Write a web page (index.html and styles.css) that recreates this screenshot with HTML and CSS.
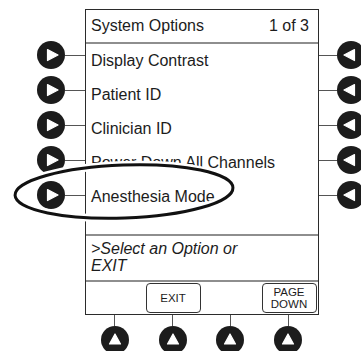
FILE: index.html
```html
<!DOCTYPE html>
<html>
<head>
<meta charset="utf-8">
<link rel="stylesheet" href="styles.css">
</head>
<body>
<div class="device">
  <div class="top">
    <div class="keys keys-left">
      <div class="key-row"><svg class="key" viewBox="0 0 28 28"><circle cx="14" cy="14" r="14"/><path class="tri" d="M10.5 8.5 L21 14 L10.5 19.5 Z"/></svg><span class="wire"></span></div>
      <div class="key-row"><svg class="key" viewBox="0 0 28 28"><circle cx="14" cy="14" r="14"/><path class="tri" d="M10.5 8.5 L21 14 L10.5 19.5 Z"/></svg><span class="wire"></span></div>
      <div class="key-row"><svg class="key" viewBox="0 0 28 28"><circle cx="14" cy="14" r="14"/><path class="tri" d="M10.5 8.5 L21 14 L10.5 19.5 Z"/></svg><span class="wire"></span></div>
      <div class="key-row"><svg class="key" viewBox="0 0 28 28"><circle cx="14" cy="14" r="14"/><path class="tri" d="M10.5 8.5 L21 14 L10.5 19.5 Z"/></svg><span class="wire"></span></div>
      <div class="key-row"><svg class="key" viewBox="0 0 28 28"><circle cx="14" cy="14" r="14"/><path class="tri" d="M10.5 8.5 L21 14 L10.5 19.5 Z"/></svg><span class="wire"></span></div>
    </div>
    <div class="screen">
      <div class="header"><span>System Options</span><span>1 of 3</span></div>
      <div class="options">
        <div class="opt">Display Contrast</div>
        <div class="opt">Patient ID</div>
        <div class="opt">Clinician ID</div>
        <div class="opt">Power Down All Channels</div>
        <div class="opt">Anesthesia Mode</div>
      </div>
      <div class="prompt">&gt;Select an Option or<br>EXIT</div>
      <div class="softkeys">
        <div class="slot"></div>
        <div class="slot"><div class="btn">EXIT</div></div>
        <div class="slot"></div>
        <div class="slot"><div class="btn">PAGE<br>DOWN</div></div>
      </div>
    </div>
    <div class="keys keys-right">
      <div class="key-row"><span class="wire"></span><svg class="key" viewBox="0 0 28 28"><circle cx="14" cy="14" r="14"/><path class="tri" d="M17.5 8.5 L7 14 L17.5 19.5 Z"/></svg></div>
      <div class="key-row"><span class="wire"></span><svg class="key" viewBox="0 0 28 28"><circle cx="14" cy="14" r="14"/><path class="tri" d="M17.5 8.5 L7 14 L17.5 19.5 Z"/></svg></div>
      <div class="key-row"><span class="wire"></span><svg class="key" viewBox="0 0 28 28"><circle cx="14" cy="14" r="14"/><path class="tri" d="M17.5 8.5 L7 14 L17.5 19.5 Z"/></svg></div>
      <div class="key-row"><span class="wire"></span><svg class="key" viewBox="0 0 28 28"><circle cx="14" cy="14" r="14"/><path class="tri" d="M17.5 8.5 L7 14 L17.5 19.5 Z"/></svg></div>
      <div class="key-row"><span class="wire"></span><svg class="key" viewBox="0 0 28 28"><circle cx="14" cy="14" r="14"/><path class="tri" d="M17.5 8.5 L7 14 L17.5 19.5 Z"/></svg></div>
    </div>
  </div>
  <div class="bottom-keys">
    <div class="bkey"><span class="vwire"></span><svg class="key" viewBox="0 0 28 28"><circle cx="14" cy="14" r="14"/><path class="tri" d="M8.5 18 L14 8 L19.5 18 Z"/></svg></div>
    <div class="bkey"><span class="vwire"></span><svg class="key" viewBox="0 0 28 28"><circle cx="14" cy="14" r="14"/><path class="tri" d="M8.5 18 L14 8 L19.5 18 Z"/></svg></div>
    <div class="bkey"><span class="vwire"></span><svg class="key" viewBox="0 0 28 28"><circle cx="14" cy="14" r="14"/><path class="tri" d="M8.5 18 L14 8 L19.5 18 Z"/></svg></div>
    <div class="bkey"><span class="vwire"></span><svg class="key" viewBox="0 0 28 28"><circle cx="14" cy="14" r="14"/><path class="tri" d="M8.5 18 L14 8 L19.5 18 Z"/></svg></div>
  </div>
  <svg class="highlight" viewBox="0 0 361 351">
    <ellipse class="halo" cx="124" cy="191.5" rx="109" ry="26.5" transform="rotate(-2 124 191.5)"/>
    <ellipse class="ring" cx="124" cy="191.5" rx="109" ry="26.5" transform="rotate(-2 124 191.5)"/>
  </svg>
</div>
</body>
</html>
```
FILE: styles.css
```css
html, body {
  margin: 0;
  padding: 0;
  background: #fff;
}
body {
  width: 361px;
  height: 351px;
  overflow: hidden;
  font-family: "Liberation Sans", Arial, sans-serif;
  color: #1c1c1c;
}
.device {
  position: relative;
  width: 361px;
  height: 351px;
  box-sizing: border-box;
  padding-top: 9px;
}
.top {
  display: flex;
  align-items: flex-start;
}
.keys {
  padding-top: 28.5px;
  flex: none;
}
.keys-left {
  width: 85px;
}
.keys-right {
  width: 43px;
  overflow: hidden;
}
.key-row {
  height: 35px;
  display: flex;
  align-items: center;
}
.keys-left .key-row {
  padding-left: 37px;
}
.keys-right .key-row {
  width: 60px;
}
.key {
  width: 28px;
  height: 28px;
  flex: none;
  display: block;
}
.key circle {
  fill: #1c1c1c;
}
.key .tri {
  fill: #fff;
  stroke: #fff;
  stroke-width: 1.2;
  stroke-linejoin: round;
}
.wire {
  height: 1px;
  background: #555;
}
.keys-left .wire {
  flex: 1;
}
.keys-right .wire {
  width: 18px;
  flex: none;
}
.screen {
  width: 234px;
  flex: none;
  box-sizing: border-box;
  border: 1px solid #2b2b2b;
  font-size: 16px;
}
.header {
  height: 32px;
  border-bottom: 2px solid #8e8e8e;
  display: flex;
  justify-content: space-between;
  align-items: center;
  padding: 0 9px 0 5px;
  line-height: 32px;
}
.options {
  height: 190px;
  border-bottom: 2px solid #8e8e8e;
  padding-left: 5px;
}
.opt {
  height: 34px;
  line-height: 34px;
  white-space: nowrap;
}
.prompt {
  box-sizing: border-box;
  border-bottom: 2px solid #8e8e8e;
  height: 46px;
  padding: 4px 0 0 5px;
  font-style: italic;
  line-height: 17px;
}
.softkeys {
  height: 32px;
  display: grid;
  grid-template-columns: repeat(4, 1fr);
  align-items: center;
  justify-items: center;
}
.btn {
  width: 55px;
  height: 30px;
  box-sizing: border-box;
  border: 1px solid #333;
  border-radius: 4px;
  display: flex;
  align-items: center;
  justify-content: center;
  text-align: center;
  font-size: 11.5px;
  line-height: 12px;
}
.bottom-keys {
  margin-left: 86px;
  width: 231px;
  display: grid;
  grid-template-columns: repeat(4, 1fr);
}
.bkey {
  display: flex;
  flex-direction: column;
  align-items: center;
}
.vwire {
  width: 1px;
  height: 11px;
  background: #555;
}
.highlight {
  position: absolute;
  left: 0;
  top: 0;
  width: 361px;
  height: 351px;
  pointer-events: none;
}
.highlight ellipse {
  fill: none;
}
.halo {
  stroke: #fff;
  stroke-width: 8;
}
.ring {
  stroke: #111;
  stroke-width: 3;
}
```
